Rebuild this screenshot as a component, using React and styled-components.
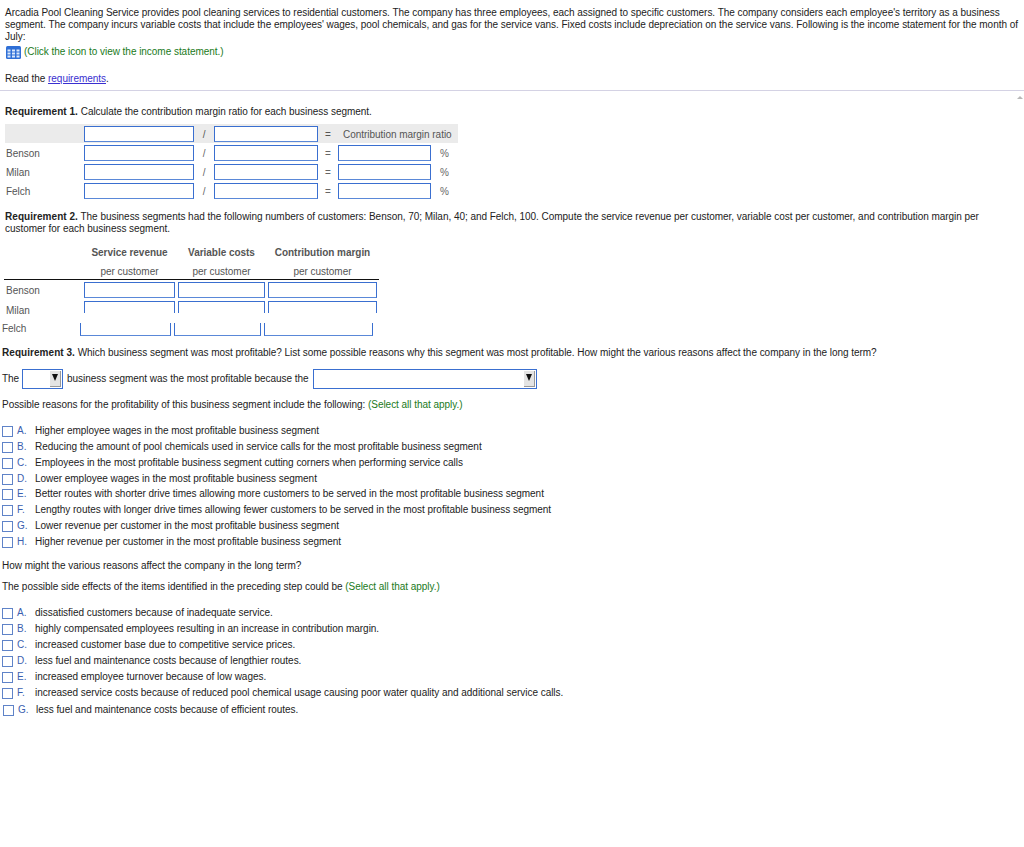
import { Fragment } from "react";
import { createGlobalStyle, styled } from "styled-components";

const GlobalStyle = createGlobalStyle`
  html, body {
    margin: 0;
    background: white;
  }
  body {
    font-family: "Liberation Sans", Arial, sans-serif;
    font-size: 10px;
    letter-spacing: -0.036px;
    line-height: 12px;
    color: #222;
  }
  b {
    letter-spacing: 0.05px;
  }
`;

const Page = styled.div`
  width: 1024px;
  height: 847px;
  overflow: hidden;
`;

const Intro = styled.div`
  padding: 7px 0 0 5px;
`;

const Paragraph = styled.p`
  margin: ${(p) => p.$top || 0}px 0 0 ${(p) => p.$left || 0}px;
  height: ${(p) => (p.$lines || 1) * 12}px;
  ${(p) => p.$width && `max-width: ${p.$width}px;`}
`;

const Hint = styled.span`
  color: #1a7a1a;
`;

const IconLine = styled.div`
  display: flex;
  align-items: center;
  gap: 3px;
  margin: 3px 0 0 1px;
  height: 12px;
`;

const RequirementLink = styled.a`
  color: #3a2fd0;
  text-decoration: underline;
`;

const DividerRow = styled.div`
  margin-top: 5px;
  height: 12px;
  border-top: 1px solid #d4d2e4;
  display: flex;
  justify-content: flex-end;
  padding: 5px 1px 0 0;
  box-sizing: border-box;
`;

const ScrollArrow = styled.span`
  width: 0;
  height: 0;
  border-left: 3px solid transparent;
  border-right: 3px solid transparent;
  border-bottom: 3px solid #b8b8b8;
`;

const RatioTable = styled.div`
  margin: 6px 0 0 5px;
  width: 453px;
  display: grid;
  grid-template-columns: 79px 110px 20px 104px 20px 93px 27px;
  grid-auto-rows: 19px;
  align-items: center;
`;

const ratioCell = `
  display: flex;
  align-items: center;
  height: 100%;
  box-sizing: border-box;
`;

const RowLabel = styled.div`
  ${ratioCell}
  padding: 2px 0 0 1px;
  color: #555;
`;

const HeaderCell = styled.div`
  ${ratioCell}
  padding-top: 2px;
  background: #ebebeb;
  color: #555;
  justify-content: ${(p) => (p.$center ? "center" : "flex-start")};
  ${(p) => p.$span && `grid-column: span ${p.$span}; padding-left: 5px;`}
`;

const Symbol = styled.div`
  ${ratioCell}
  padding-top: 2px;
  justify-content: center;
  color: #666;
`;

const InputBox = styled.div`
  box-sizing: border-box;
  height: 16px;
  border: 1px solid #3a6fd0;
  border-bottom-color: #5a88d8;
  background: white;
`;

const BoxCell = styled.div`
  ${ratioCell}
  background: ${(p) => (p.$shaded ? "#ebebeb" : "white")};
`;

const WideBox = styled(InputBox)`
  width: 100%;
`;

const HeaderGrid = styled.div`
  margin: 8px 0 0 84px;
  display: grid;
  grid-template-columns: 91px 3px 87px 3px 109px;
  grid-template-rows: 19px 19px;
  text-align: center;
  color: #555;
  align-items: center;
`;

const BoldHead = styled.div`
  font-weight: bold;
  grid-column: ${(p) => p.$col};
  white-space: nowrap;
`;

const PlainHead = styled.div`
  grid-column: ${(p) => p.$col};
  white-space: nowrap;
`;

const Rule = styled.div`
  margin: -2px 0 0 4px;
  width: 375px;
  height: 1px;
  background: #111;
`;

const CustomerRow = styled.div`
  display: grid;
  grid-template-columns: 75px 91px 87px 109px;
  grid-template-rows: ${(p) => p.$height}px;
  column-gap: 3px;
  height: ${(p) => p.$height}px;
  margin-top: ${(p) => p.$top}px;
  margin-left: ${(p) => p.$left}px;
  align-items: ${(p) => (p.$bottom ? "end" : "start")};
  color: #555;
`;

const CustomerLabel = styled.div`
  line-height: ${(p) => p.$line}px;
`;

/* the boxes of the lower rows are cut off in the page itself */
const BoxSlot = styled.div`
  height: ${(p) => p.$height}px;
  overflow: hidden;
  display: flex;
  flex-direction: column;
  justify-content: ${(p) => (p.$bottom ? "flex-end" : "flex-start")};
`;

const SlotBox = styled(InputBox)`
  flex: none;
`;

const SelectRow = styled.div`
  display: flex;
  align-items: center;
  gap: 4px;
  margin: 10px 0 0 2px;
  height: 20px;
`;

const LeadWord = styled.span`
  width: 16px;
  white-space: nowrap;
`;

const Dropdown = styled.div`
  box-sizing: border-box;
  width: ${(p) => p.$width}px;
  height: 20px;
  border: 1px solid #3a6fd0;
  display: flex;
  justify-content: flex-end;
  align-items: center;
  padding-right: 1px;
`;

const DropButton = styled.div`
  width: 11px;
  height: 16px;
  background: #e4e4e4;
  border-right: 1px solid #999;
  border-bottom: 1px solid #999;
  display: flex;
  justify-content: center;
  padding-top: 3px;
  box-sizing: border-box;
`;

const DropArrow = styled.span`
  width: 0;
  height: 0;
  border-left: 3.5px solid transparent;
  border-right: 3.5px solid transparent;
  border-top: 7px solid #111;
`;

const OptionList = styled.ul`
  list-style: none;
  margin: ${(p) => p.$top}px 0 0 2px;
  padding: 0;
`;

const Option = styled.li`
  display: flex;
  align-items: center;
  height: 16px;
  margin-top: ${(p) => p.$shift || 0}px;
  margin-left: ${(p) => (p.$shift > 0 ? 1 : 0)}px;
`;

const CheckBox = styled.span`
  box-sizing: border-box;
  width: 11px;
  height: 11px;
  border: 1px solid #5f83c8;
  flex: none;
`;

const OptionLetter = styled.span`
  width: 18px;
  margin-left: 4px;
  flex: none;
  color: #3b5fb0;
`;

const SheetIcon = () => (
  <svg width="15" height="13" viewBox="0 0 15 13">
    <rect x="0" y="0" width="15" height="13" rx="1.5" fill="#2f6fd6" />
    <g fill="#dce9fb">
      <rect x="1.5" y="3.5" width="3" height="2" />
      <rect x="6" y="3.5" width="3" height="2" />
      <rect x="10.5" y="3.5" width="3" height="2" />
      <rect x="1.5" y="6.5" width="3" height="2" />
      <rect x="6" y="6.5" width="3" height="2" />
      <rect x="10.5" y="6.5" width="3" height="2" />
      <rect x="1.5" y="9.5" width="3" height="2" />
      <rect x="6" y="9.5" width="3" height="2" />
      <rect x="10.5" y="9.5" width="3" height="2" />
    </g>
  </svg>
);

const reasons = [
  ["A.", "Higher employee wages in the most profitable business segment"],
  ["B.", "Reducing the amount of pool chemicals used in service calls for the most profitable business segment"],
  ["C.", "Employees in the most profitable business segment cutting corners when performing service calls"],
  ["D.", "Lower employee wages in the most profitable business segment"],
  ["E.", "Better routes with shorter drive times allowing more customers to be served in the most profitable business segment", -1],
  ["F.", "Lengthy routes with longer drive times allowing fewer customers to be served in the most profitable business segment"],
  ["G.", "Lower revenue per customer in the most profitable business segment"],
  ["H.", "Higher revenue per customer in the most profitable business segment"],
];

const effects = [
  ["A.", "dissatisfied customers because of inadequate service."],
  ["B.", "highly compensated employees resulting in an increase in contribution margin."],
  ["C.", "increased customer base due to competitive service prices."],
  ["D.", "less fuel and maintenance costs because of lengthier routes."],
  ["E.", "increased employee turnover because of low wages."],
  ["F.", "increased service costs because of reduced pool chemical usage causing poor water quality and additional service calls."],
  ["G.", "less fuel and maintenance costs because of efficient routes.", 1],
];

const App = () => {
  return (
    <Page>
      <GlobalStyle />
      <Intro>
        <Paragraph $lines={3}>
          Arcadia Pool Cleaning Service provides pool cleaning services to residential customers. The company has three employees, each assigned to specific customers. The company considers each employee's territory as a business segment. The company incurs variable costs that include the employees' wages, pool chemicals, and gas for the service vans. Fixed costs include depreciation on the service vans. Following is the income statement for the month of July:
        </Paragraph>
        <IconLine>
          <SheetIcon />
          <Hint>(Click the icon to view the income statement.)</Hint>
        </IconLine>
        <Paragraph $top={15}>
          Read the <RequirementLink href="#">requirements</RequirementLink>.
        </Paragraph>
      </Intro>
      <DividerRow>
        <ScrollArrow />
      </DividerRow>
      <Paragraph $top={4} $left={5}>
        <b>Requirement 1.</b> Calculate the contribution margin ratio for each business segment.
      </Paragraph>
      <RatioTable>
        <HeaderCell />
        <BoxCell $shaded><WideBox /></BoxCell>
        <HeaderCell $center>/</HeaderCell>
        <BoxCell $shaded><WideBox /></BoxCell>
        <HeaderCell $center>=</HeaderCell>
        <HeaderCell $span={2}>Contribution margin ratio</HeaderCell>
        {["Benson", "Milan", "Felch"].map((name) => (
          <Fragment key={name}>
            <RowLabel>{name}</RowLabel>
            <BoxCell><WideBox /></BoxCell>
            <Symbol>/</Symbol>
            <BoxCell><WideBox /></BoxCell>
            <Symbol>=</Symbol>
            <BoxCell><WideBox /></BoxCell>
            <Symbol>%</Symbol>
          </Fragment>
        ))}
      </RatioTable>
      <Paragraph $top={11} $left={5} $lines={2} $width={985}>
        <b>Requirement 2.</b> The business segments had the following numbers of customers: Benson, 70; Milan, 40; and Felch, 100. Compute the service revenue per customer, variable cost per customer, and contribution margin per customer for each business segment.
      </Paragraph>
      <HeaderGrid>
        <BoldHead $col={1}>Service revenue</BoldHead>
        <BoldHead $col={3}>Variable costs</BoldHead>
        <BoldHead $col={5}>Contribution margin</BoldHead>
        <PlainHead $col={1}>per customer</PlainHead>
        <PlainHead $col={3}>per customer</PlainHead>
        <PlainHead $col={5}>per customer</PlainHead>
      </HeaderGrid>
      <Rule />
      <CustomerRow $height={16} $top={2} $left={6}>
        <CustomerLabel $line={18}>Benson</CustomerLabel>
        <InputBox /><InputBox /><InputBox />
      </CustomerRow>
      <CustomerRow $height={12} $top={3} $left={6}>
        <CustomerLabel $line={19}>Milan</CustomerLabel>
        <BoxSlot $height={12}><SlotBox /></BoxSlot>
        <BoxSlot $height={12}><SlotBox /></BoxSlot>
        <BoxSlot $height={12}><SlotBox /></BoxSlot>
      </CustomerRow>
      <CustomerRow $height={13} $top={10} $left={2} $bottom>
        <CustomerLabel $line={14}>Felch</CustomerLabel>
        <BoxSlot $height={13} $bottom><SlotBox /></BoxSlot>
        <BoxSlot $height={13} $bottom><SlotBox /></BoxSlot>
        <BoxSlot $height={13} $bottom><SlotBox /></BoxSlot>
      </CustomerRow>
      <Paragraph $top={11} $left={2}>
        <b>Requirement 3.</b> Which business segment was most profitable? List some possible reasons why this segment was most profitable. How might the various reasons affect the company in the long term?
      </Paragraph>
      <SelectRow>
        <LeadWord>The</LeadWord>
        <Dropdown $width={41}><DropButton><DropArrow /></DropButton></Dropdown>
        business segment was the most profitable because the
        <Dropdown $width={224}><DropButton><DropArrow /></DropButton></Dropdown>
      </SelectRow>
      <Paragraph $top={10} $left={2}>
        Possible reasons for the profitability of this business segment include the following: <Hint>(Select all that apply.)</Hint>
      </Paragraph>
      <OptionList $top={12}>
        {reasons.map(([letter, text, shift]) => (
          <Option key={letter} $shift={shift}>
            <CheckBox />
            <OptionLetter>{letter}</OptionLetter>
            {text}
          </Option>
        ))}
      </OptionList>
      <Paragraph $top={10} $left={2}>How might the various reasons affect the company in the long term?</Paragraph>
      <Paragraph $top={9} $left={2}>
        The possible side effects of the items identified in the preceding step could be <Hint>(Select all that apply.)</Hint>
      </Paragraph>
      <OptionList $top={12}>
        {effects.map(([letter, text, shift]) => (
          <Option key={letter} $shift={shift}>
            <CheckBox />
            <OptionLetter>{letter}</OptionLetter>
            {text}
          </Option>
        ))}
      </OptionList>
    </Page>
  );
};

export default App;
